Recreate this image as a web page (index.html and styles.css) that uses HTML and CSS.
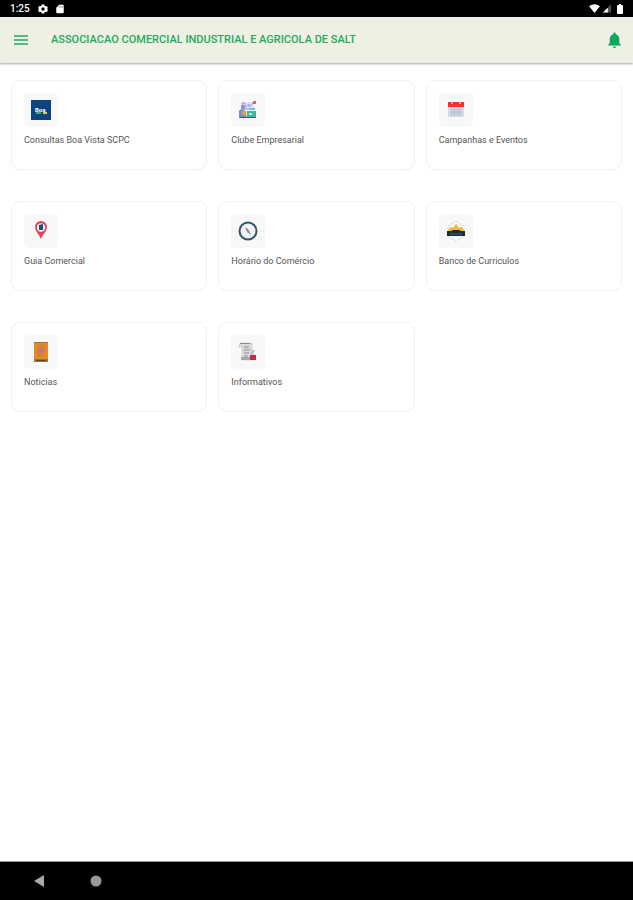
FILE: index.html
```
<!DOCTYPE html>
<html lang="pt-BR">
<head>
    <meta charset="UTF-8">
    <meta name="viewport" content="width=device-width, initial-scale=1.0">
    <title>Associação Comercial</title>
    <link rel="stylesheet" href="styles.css">
</head>
<body>
    <div class="status-bar">
        <span class="clock">1:25</span>
        <svg class="status-icon" viewBox="0 0 24 24" aria-hidden="true"><path fill="#fff" fill-rule="evenodd" d="M9 1h6l.7 3.4 2 1.2L21 4.5l3 5-2.5 2.5 2.5 2.5-3 5-3.3-1.1-2 1.2L15 23H9l-.7-3.4-2-1.2L3 19.5l-3-5L2.5 12 0 9.5l3-5 3.3 1.1 2-1.2zM12 8a4 4 0 1 0 0 8 4 4 0 0 0 0-8z"/></svg>
        <svg class="status-icon card-icon" viewBox="0 0 24 24" aria-hidden="true"><path fill="#fff" d="M10 2h9q2 0 2 2v16q0 2-2 2H5q-2 0-2-2V9z"/><path stroke="#777" stroke-width="2" d="M10 5v4M14 5v4M18 5v4"/></svg>
        <div class="status-right">
            <svg class="wifi" viewBox="0 0 24 20" aria-hidden="true"><path fill="#fff" d="M0 5Q12-4 24 5L12 20z"/></svg>
            <svg class="signal" viewBox="0 0 20 20" aria-hidden="true"><path fill="#555" d="M20 0v20H0z"/><path fill="#fff" d="M12 8v12H0z"/></svg>
            <svg class="battery" viewBox="0 0 12 20" aria-hidden="true"><path fill="#fff" d="M4 0h4v2h2q2 0 2 2v14q0 2-2 2H2q-2 0-2-2V4q0-2 2-2h2z"/></svg>
        </div>
    </div>

    <header class="app-bar">
        <button class="icon-button" type="button" aria-label="Menu">
            <svg class="menu-icon" viewBox="0 0 14 10"><path stroke="#1faa5e" stroke-width="1.5" d="M0 1h14M0 5h14M0 9h14"/></svg>
        </button>
        <h1>ASSOCIACAO COMERCIAL INDUSTRIAL E AGRICOLA DE SALT</h1>
        <button class="icon-button" type="button" aria-label="Notificações">
            <svg class="bell-icon" viewBox="0 0 16 20"><path fill="#0da95b" d="M8 20a2 2 0 0 0 2-2H6a2 2 0 0 0 2 2zm6-6V9c0-3.1-1.6-5.6-4.5-6.3V2a1.5 1.5 0 0 0-3 0v.7C3.6 3.4 2 5.9 2 9v5l-2 2v1h16v-1z"/></svg>
        </button>
    </header>

    <main class="card-grid">
        <a class="card" href="#consultas">
            <span class="tile">
                <svg viewBox="0 0 20 20"><path fill="#0c4380" d="M0 0h20v20H0z"/><text x="4" y="12" font-size="6" font-weight="bold" fill="#fff">Boa</text><path fill="#39a981" d="M5 12h5v2H5z"/><path fill="#e3c85c" d="M12 12h4v2h-4z"/></svg>
            </span>
            <span class="label">Consultas Boa Vista SCPC</span>
        </a>
        <a class="card" href="#clube">
            <span class="tile">
                <svg viewBox="0 0 20 20"><path fill="#dce3f5" d="M4 2h12v8H4z"/><path fill="none" stroke="#8fa0df" d="M4 8V3h3v4l4-3v3l5-5M3 9h13"/><path fill="#e45b78" d="M15 1h3v3h-3z"/><circle cx="5" cy="7" r="2" fill="#8587d8"/><path fill="#7489d4" d="M1 11q3-4 6 0l2 7H1z"/><circle cx="6" cy="13" r="2.5" fill="#d9a247"/><path fill="#41b790" d="M9 11h9v7H9z"/><path fill="#c6e9dc" d="M11 13h3v2h-3z"/><path fill="#46557b" d="M2 17h16v1H2z"/><path fill="#7eb8e7" d="M11 8h6v2h-6z"/></svg>
            </span>
            <span class="label">Clube Empresarial</span>
        </a>
        <a class="card" href="#campanhas">
            <span class="tile">
                <svg viewBox="0 0 20 20"><path fill="#d3dee7" d="M2 5h16v12H2z"/><path fill="#e5372b" d="M2 2h16v5H2z"/><path stroke="#f4dedb" stroke-width="1.5" d="M6 1v3M14 1v3"/><path fill="none" stroke="#aebfcb" d="M5 9h10v6H5zM5 12h10M8.5 9v6M12 9v6"/></svg>
            </span>
            <span class="label">Campanhas e Eventos</span>
        </a>
        <a class="card" href="#guia">
            <span class="tile">
                <svg viewBox="0 0 20 20"><path fill="#e8415a" d="M10 0a6 6 0 0 1 6 6c0 4-4 7-6 12C8 13 4 10 4 6a6 6 0 0 1 6-6z"/><circle cx="10" cy="6.5" r="4.2" fill="#eef4f8"/><path fill="#174d78" d="M8 4l4-1v6H8z"/></svg>
            </span>
            <span class="label">Guia Comercial</span>
        </a>
        <a class="card" href="#horario">
            <span class="tile">
                <svg viewBox="0 0 20 20"><circle cx="10" cy="10" r="8.5" fill="#f2f6fb" stroke="#34546c" stroke-width="2"/><circle cx="10" cy="10" r="6" fill="none" stroke="#a9c3d4" stroke-width=".7" stroke-dasharray="1 2"/><path fill="#d95858" d="M7 6l4 3-2 2z"/><path fill="#7c92a4" d="M11 9l2 5-4-3z"/></svg>
            </span>
            <span class="label">Horário do Comércio</span>
        </a>
        <a class="card" href="#curriculos">
            <span class="tile">
                <svg viewBox="0 0 20 20"><path fill="none" stroke="#d5d7da" stroke-dasharray="3 1" d="M10 0l8 5v10l-8 5-8-5V5z"/><path fill="#f2b735" d="M2 10l2-4 3 1 3-4 3 4 3-1 2 4z"/><path fill="#172c36" d="M1 10h4l2-1h6l2 1h4v5H1z"/><path stroke="#4d6064" d="M4 13h12"/></svg>
            </span>
            <span class="label">Banco de Curriculos</span>
        </a>
        <a class="card" href="#noticias">
            <span class="tile">
                <svg viewBox="0 0 20 20"><path fill="#e58b25" d="M3 0h14v20H3z"/><path fill="#9c713d" d="M3 0h14v1H3zM3 17h14v3H3z"/><path fill="#c8795f" d="M6 6l6-2 3 3-4 6-5-1z"/><path stroke="#cf802b" d="M6 3h8M6 14h8"/><path stroke="#544835" d="M5 18.5h10"/></svg>
            </span>
            <span class="label">Noticias</span>
        </a>
        <a class="card" href="#informativos">
            <span class="tile">
                <svg viewBox="0 0 20 20"><path fill="#dadbdc" stroke="#bbb" stroke-width=".5" d="M3 1h11v7l2 5v5H4V5H1V3z"/><path stroke="#888b8e" d="M2 1.5h10M6 5h5M6 8h6M6 11h5M6 14h4"/><path fill="#a5a6a8" d="M3 15h10v3H3z"/><path fill="#c52e43" d="M12 13h6v5h-6z"/><path stroke="#b4b9bd" stroke-width="1.5" d="M13 12l3-4"/></svg>
            </span>
            <span class="label">Informativos</span>
        </a>
    </main>

    <nav class="nav-bar">
        <button class="nav-button" type="button" aria-label="Voltar">
            <svg viewBox="0 0 12 12"><path fill="#aaa" d="M11 0v12L1 6z"/></svg>
        </button>
        <button class="nav-button" type="button" aria-label="Início">
            <svg viewBox="0 0 12 12"><circle cx="6" cy="6" r="5.5" fill="#999"/></svg>
        </button>
    </nav>
</body>
</html>
```
FILE: styles.css
```
/* General page styling */
body {
    font-family: Roboto, sans-serif;
    background-color: #fff;
    margin: 0;
    min-height: 100vh;
    display: flex;
    flex-direction: column;
}

svg {
    display: block;
}

button {
    background: none;
    border: none;
    padding: 0;
    cursor: pointer;
}

/* Android status bar */
.status-bar {
    display: flex;
    align-items: center;
    gap: 8px;
    height: 17px;
    padding: 0 10px;
    background-color: #000;
    color: #fff;
}

.clock {
    font-size: 10px;
    font-weight: 500;
    line-height: 17px;
}

.status-icon {
    width: 10px;
    height: 10px;
}

.card-icon {
    margin-left: -1px;
}

.status-right {
    display: flex;
    align-items: center;
    gap: 3px;
    margin-left: auto;
}

.wifi {
    width: 11px;
    height: 9px;
}

.signal {
    width: 8px;
    height: 9px;
    margin-right: 3px;
}

.battery {
    width: 6px;
    height: 10px;
}

/* Title bar */
.app-bar {
    display: flex;
    align-items: center;
    height: 46px;
    padding: 0 12px 0 14px;
    background-color: #eff0e3;
    box-shadow: 0 1px 2px rgba(0, 0, 0, 0.35);
}

h1 {
    flex: 1;
    margin: 0 0 0 23px;
    font-size: 11px;
    font-weight: 500;
    line-height: 16px;
    color: #1faa5e;
}

.menu-icon {
    width: 14px;
    height: 10px;
}

.bell-icon {
    width: 13px;
    height: 16px;
}

/* Cards */
.card-grid {
    flex: 1;
    display: grid;
    grid-template-columns: repeat(3, 1fr);
    align-content: start;
    gap: 31px 11px;
    padding: 17px 11px;
}

.card {
    display: flex;
    flex-direction: column;
    align-items: flex-start;
    gap: 7px;
    padding: 12px 12px 23px;
    border: 1px solid #f0f0f0;
    border-radius: 9px;
    color: #555;
    text-decoration: none;
}

.tile {
    display: flex;
    align-items: center;
    justify-content: center;
    width: 34px;
    height: 34px;
    border-radius: 5px;
    background-color: #f8f8f8;
}

.tile svg {
    width: 20px;
    height: 20px;
}

.label {
    font-size: 9px;
    line-height: 12px;
}

/* Android navigation bar */
.nav-bar {
    display: flex;
    align-items: center;
    gap: 45px;
    height: 38px;
    padding: 0 33px;
    border-top: 1px solid #999;
    background-color: #000;
}

.nav-button svg {
    width: 12px;
    height: 12px;
}
```
